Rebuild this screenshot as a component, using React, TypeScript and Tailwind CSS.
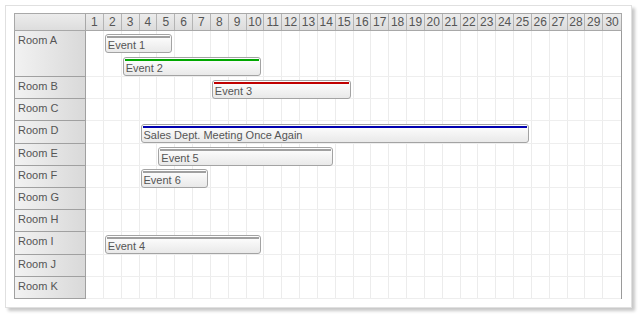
import React from 'react';

interface CalEvent {
  text: string;
  place: string;
  bar: string;
}

interface Room {
  name: string;
  tall?: boolean;
  events: CalEvent[];
}

const days = Array.from({ length: 30 }, (_, i) => i + 1);

const rooms: Room[] = [
  {
    name: 'Room A',
    tall: true,
    events: [
      { text: 'Event 1', place: 'col-start-2 col-span-4 row-start-1', bar: 'bg-[#a0a0a0]' },
      { text: 'Event 2', place: 'col-start-3 col-span-8 row-start-2', bar: 'bg-[#00a800]' },
    ],
  },
  { name: 'Room B', events: [{ text: 'Event 3', place: 'col-start-8 col-span-8 row-start-1', bar: 'bg-[#c00000]' }] },
  { name: 'Room C', events: [] },
  {
    name: 'Room D',
    events: [{ text: 'Sales Dept. Meeting Once Again', place: 'col-start-4 col-span-22 row-start-1', bar: 'bg-[#0000b0]' }],
  },
  { name: 'Room E', events: [{ text: 'Event 5', place: 'col-start-5 col-span-10 row-start-1', bar: 'bg-[#a0a0a0]' }] },
  { name: 'Room F', events: [{ text: 'Event 6', place: 'col-start-4 col-span-4 row-start-1', bar: 'bg-[#a0a0a0]' }] },
  { name: 'Room G', events: [] },
  { name: 'Room H', events: [] },
  { name: 'Room I', events: [{ text: 'Event 4', place: 'col-start-2 col-span-9 row-start-1', bar: 'bg-[#a0a0a0]' }] },
  { name: 'Room J', events: [] },
  { name: 'Room K', events: [] },
];

const EventBox: React.FC<{ ev: CalEvent }> = ({ ev }) => (
  <div
    className={`${ev.place} mt-[3px] ml-px mr-[3px] h-[19px] min-w-0 overflow-hidden rounded-[3px] border border-[#a3a3a3] bg-linear-to-b from-white to-[#e9e9e9] flex flex-col`}
  >
    <div className={`mx-px mt-px h-[2px] shrink-0 ${ev.bar}`} />
    <div className="px-[2px] text-[11px] leading-[14px] text-[#555] whitespace-nowrap">{ev.text}</div>
  </div>
);

export default function App() {
  return (
    <div className="w-[640px] h-[319px] bg-white p-[5px] font-['Liberation_Sans',Arial,sans-serif]">
      <div className="w-[627px] h-[303px] border border-[#e0e0e0] bg-white shadow-[3px_3px_3px_rgba(0,0,0,0.22)] pl-[8px] pt-[7px]">
        <div className="w-[608px] flex flex-col">
          {/* header */}
          <div className="flex h-[18px]">
            <div className="w-[72px] shrink-0 border-t border-l border-r border-b border-[#a8a8a8] bg-linear-to-b from-[#ececec] to-[#dddddd]" />
            <div className="flex-1 grid grid-cols-[repeat(30,minmax(0,1fr))] border-t border-b border-r border-[#a8a8a8]">
              {days.map(d => (
                <div
                  key={d}
                  className="border-r border-[#b4b4b4] last:border-r-0 bg-linear-to-b from-[#ececec] to-[#dcdcdc] text-[12px] leading-[16px] text-center text-[#555]"
                >
                  {d}
                </div>
              ))}
            </div>
          </div>

          {/* rows */}
          {rooms.map(room => (
            <div key={room.name} className={`flex ${room.tall ? 'h-[46px]' : 'h-[22.2px]'}`}>
              <div className="w-[72px] shrink-0 border-l border-r border-b border-[#a0a0a0] bg-linear-to-r from-[#f2f2f2] to-[#d9d9d9] px-[3px] pt-[2px] text-[11px] leading-[14px] text-[#555]">
                {room.name}
              </div>
              <div className="flex-1 grid border-r border-[#9a9a9a]">
                <div className="col-start-1 row-start-1 grid grid-cols-[repeat(30,minmax(0,1fr))] border-b border-[#eeeeee]">
                  {days.map(d => (
                    <div key={d} className="border-r border-[#ececec] last:border-r-0" />
                  ))}
                </div>
                <div
                  className={`col-start-1 row-start-1 grid grid-cols-[repeat(30,minmax(0,1fr))] ${
                    room.tall ? 'grid-rows-[23px_23px]' : 'grid-rows-[22px]'
                  }`}
                >
                  {room.events.map(ev => (
                    <EventBox key={ev.text} ev={ev} />
                  ))}
                </div>
              </div>
            </div>
          ))}
        </div>
      </div>
    </div>
  );
}
